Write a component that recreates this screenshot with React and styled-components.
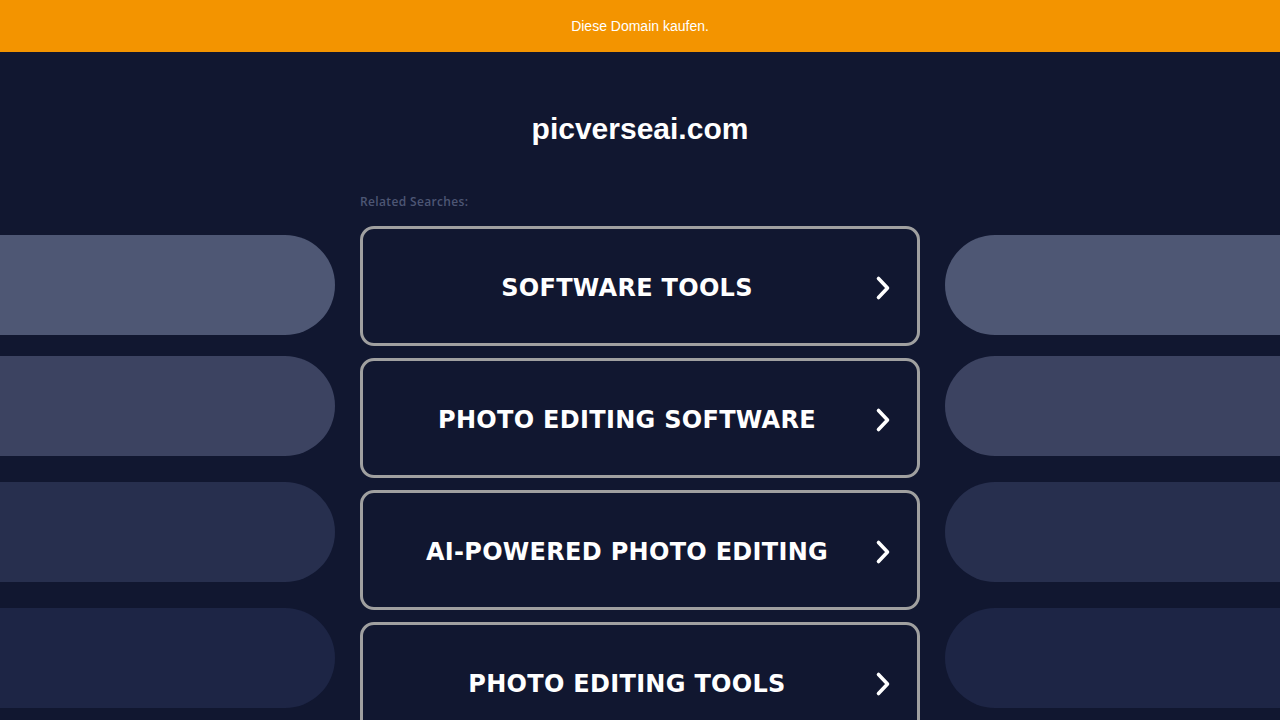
import React from "react";
import styled, { createGlobalStyle } from "styled-components";

const GlobalStyle = createGlobalStyle`
  html, body {
    margin: 0;
    padding: 0;
    background: #111730;
    overflow: hidden;
  }
  body {
    font-family: "Liberation Sans", Arial, sans-serif;
  }
`;

const Page = styled.div`
  min-height: 720px;
  background: #111730;
`;

const TopBar = styled.a`
  display: flex;
  align-items: center;
  justify-content: center;
  height: 52px;
  background: #f39400;
  color: #ffffff;
  font-family: "Liberation Sans", Arial, sans-serif;
  font-size: 14px;
  text-decoration: none;
`;

const Title = styled.h1`
  margin: 59px 0 0;
  height: 36px;
  line-height: 36px;
  text-align: center;
  color: #ffffff;
  font-family: "Liberation Sans", Arial, sans-serif;
  font-size: 30px;
  font-weight: 700;
`;

const Main = styled.div`
  display: grid;
  grid-template-columns: 1fr 560px 1fr;
  column-gap: 25px;
  margin-top: 48px;
`;

const SideColumn = styled.div`
  display: flex;
  flex-direction: column;
`;

const Pill = styled.div`
  height: 100px;
  margin-top: ${(p) => p.$offset}px;
  background: ${(p) => p.$color};
  border-radius: ${(p) => (p.$side === "left" ? "0 50px 50px 0" : "50px 0 0 50px")};
`;

const Center = styled.div`
  display: flex;
  flex-direction: column;
`;

const Label = styled.div`
  height: 14px;
  line-height: 14px;
  margin-bottom: 17px;
  color: #4d5674;
  font-family: "Open Sans", Lato, sans-serif;
  font-size: 12px;
  font-weight: 600;
  letter-spacing: 0.35px;
`;

const List = styled.div`
  display: flex;
  flex-direction: column;
  gap: 12px;
`;

const SearchButton = styled.a`
  display: flex;
  align-items: center;
  box-sizing: border-box;
  height: 120px;
  padding: 4px 26px 0;
  gap: 10px;
  border: 3px solid #a0a0a0;
  border-radius: 14px;
  background: #111730;
  color: #ffffff;
  text-decoration: none;
  cursor: pointer;
`;

const ButtonText = styled.span`
  flex: 1;
  text-align: center;
  font-family: "DejaVu Sans", Verdana, sans-serif;
  font-size: 24px;
  font-weight: 700;
  letter-spacing: 0.3px;
`;

const Chevron = () => (
  <svg width="16" height="26" viewBox="0 0 16 26" aria-hidden="true">
    <polyline
      points="3.5,3.5 12.5,13 3.5,22.5"
      fill="none"
      stroke="#ffffff"
      strokeWidth="3.6"
      strokeLinecap="round"
      strokeLinejoin="round"
    />
  </svg>
);

const pills = [
  { offset: 40, color: "#4e5774" },
  { offset: 21, color: "#3c4361" },
  { offset: 26, color: "#272f4e" },
  { offset: 26, color: "#1d2545" },
];

const searches = [
  "SOFTWARE TOOLS",
  "PHOTO EDITING SOFTWARE",
  "AI-POWERED PHOTO EDITING",
  "PHOTO EDITING TOOLS",
];

export default function App() {
  return (
    <Page>
      <GlobalStyle />
      <TopBar href="#">Diese Domain kaufen.</TopBar>
      <Title>picverseai.com</Title>
      <Main>
        <SideColumn>
          {pills.map((p, i) => (
            <Pill key={i} $side="left" $offset={p.offset} $color={p.color} />
          ))}
        </SideColumn>
        <Center>
          <Label>Related Searches:</Label>
          <List>
            {searches.map((s) => (
              <SearchButton key={s} href="#">
                <ButtonText>{s}</ButtonText>
                <Chevron />
              </SearchButton>
            ))}
          </List>
        </Center>
        <SideColumn>
          {pills.map((p, i) => (
            <Pill key={i} $side="right" $offset={p.offset} $color={p.color} />
          ))}
        </SideColumn>
      </Main>
    </Page>
  );
}
